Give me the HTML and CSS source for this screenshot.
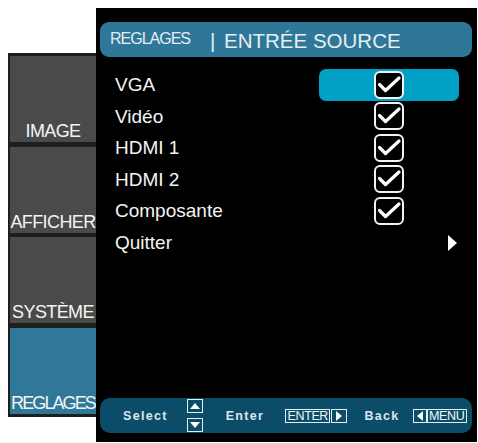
FILE: index.html
```html
<!DOCTYPE html>
<html lang="fr">
<head>
<meta charset="utf-8">
<title>Réglages - Entrée source</title>
<link rel="stylesheet" href="styles.css">
</head>
<body>
<div class="screen">
  <nav class="side">
    <div class="tab"><span>IMAGE</span></div>
    <div class="tab"><span>AFFICHER</span></div>
    <div class="tab"><span>SYSTÈME</span></div>
    <div class="tab active"><span>REGLAGES</span></div>
  </nav>
  <main class="panel">
    <header class="head">
      <span class="crumb">REGLAGES</span>
      <span class="title"><span class="sep">|</span> ENTRÉE SOURCE</span>
    </header>
    <ul class="list">
      <li class="row"><span class="label">VGA</span><span class="cell sel"><span class="box"><svg viewBox="0 0 26 24" width="26" height="24"><path d="M3.5 11.5 L9.5 17.5 L23 5" /></svg></span></span></li>
      <li class="row"><span class="label">Vidéo</span><span class="cell"><span class="box"><svg viewBox="0 0 26 24" width="26" height="24"><path d="M3.5 11.5 L9.5 17.5 L23 5" /></svg></span></span></li>
      <li class="row"><span class="label">HDMI 1</span><span class="cell"><span class="box"><svg viewBox="0 0 26 24" width="26" height="24"><path d="M3.5 11.5 L9.5 17.5 L23 5" /></svg></span></span></li>
      <li class="row"><span class="label">HDMI 2</span><span class="cell"><span class="box"><svg viewBox="0 0 26 24" width="26" height="24"><path d="M3.5 11.5 L9.5 17.5 L23 5" /></svg></span></span></li>
      <li class="row"><span class="label">Composante</span><span class="cell"><span class="box"><svg viewBox="0 0 26 24" width="26" height="24"><path d="M3.5 11.5 L9.5 17.5 L23 5" /></svg></span></span></li>
      <li class="row"><span class="label">Quitter</span><span class="cell end"><span class="tri"></span></span></li>
    </ul>
    <footer class="foot">
      <span class="key k-select">Select</span>
      <span class="updown"><i class="kbd up"></i><i class="kbd down"></i></span>
      <span class="key k-enter">Enter</span>
      <span class="tag t-enter">ENTER</span><i class="kbd right"></i>
      <span class="key k-back">Back</span>
      <i class="kbd left"></i><span class="tag">MENU</span>
    </footer>
  </main>
</div>
</body>
</html>
```
FILE: styles.css
```css
body {
  margin: 0;
  background: #ffffff;
  font-family: "Liberation Sans", Arial, sans-serif;
}

.screen {
  display: flex;
  align-items: flex-start;
  padding: 8px 0 0 8px;
}

/* left tabs */
.side {
  margin-top: 45px;
  width: 86px;
  border: solid #1e1e1e;
  border-width: 3px 0 3px 2px;
  background: #1e1e1e;
  display: flex;
  flex-direction: column;
  gap: 4.5px;
}

.tab {
  height: 86px;
  box-sizing: border-box;
  background: #4a4a4a;
  display: flex;
  align-items: flex-end;
  justify-content: center;
  padding-bottom: 2px;
  color: #f4f4f4;
  font-size: 18px;
  line-height: 18px;
  letter-spacing: -0.6px;
  white-space: nowrap;
}

.tab.active {
  background: #2f7899;
  letter-spacing: -1.9px;
}

/* main panel */
.panel {
  width: 381px;
  height: 434px;
  box-sizing: border-box;
  background: #000000;
  padding: 14px 5px 9px 4px;
  display: flex;
  flex-direction: column;
}

.head {
  height: 35px;
  flex: none;
  background: #2f7799;
  border-radius: 9px;
  display: flex;
  align-items: center;
  padding-left: 10px;
  color: #e4eef3;
}

.crumb {
  font-size: 16px;
  line-height: 16px;
  letter-spacing: -1px;
  margin-bottom: 2px;
}

.title {
  font-size: 20.5px;
  line-height: 20px;
  margin-left: 20px;
  margin-top: 2px;
  white-space: nowrap;
}

.sep {
  margin-right: 3px;
}

.list {
  list-style: none;
  margin: 12px 0 0;
  padding: 0 13px 0 15px;
  flex: 1;
  color: #f4f4f4;
  font-size: 19px;
}

.row {
  height: 31.5px;
  display: flex;
  align-items: center;
}

.label {
  flex: 1;
  line-height: 19px;
}

.cell {
  width: 140px;
  height: 100%;
  display: flex;
  align-items: center;
  justify-content: center;
}

.cell.sel {
  background: #00a1c4;
  border-radius: 7px;
}

.cell.end {
  justify-content: flex-end;
  padding-right: 2px;
  box-sizing: border-box;
}

.box {
  width: 30px;
  height: 28px;
  box-sizing: border-box;
  border: 2px solid #f2f2f2;
  border-radius: 6px;
  background: #000000;
  display: flex;
  align-items: center;
  justify-content: center;
}

.box svg path {
  fill: none;
  stroke: #ffffff;
  stroke-width: 3.2;
  stroke-linecap: round;
  stroke-linejoin: round;
}

.tri {
  width: 0;
  height: 0;
  margin-top: 2px;
  border-left: 9px solid #ffffff;
  border-top: 8.5px solid transparent;
  border-bottom: 8.5px solid transparent;
}

/* footer help bar */
.foot {
  height: 35px;
  flex: none;
  background: #0b4d69;
  border-radius: 10px;
  display: flex;
  align-items: center;
  padding-left: 23px;
  color: #dce6ea;
}

.key {
  font-weight: bold;
  font-size: 12.5px;
  letter-spacing: 1.3px;
  line-height: 14px;
}

.updown {
  display: flex;
  flex-direction: column;
  gap: 5px;
  margin-left: 19px;
}

.k-enter { margin-left: 23px; }
.t-enter { margin-left: 21px; }
.k-back { margin-left: 17px; }

.kbd {
  width: 16px;
  height: 14px;
  box-sizing: border-box;
  border: 1.5px solid #e6eef2;
  display: flex;
  align-items: center;
  justify-content: center;
  flex: none;
}

.kbd::before {
  content: "";
  width: 0;
  height: 0;
}

.up::before {
  border-left: 5.5px solid transparent;
  border-right: 5.5px solid transparent;
  border-bottom: 6.5px solid #ffffff;
}

.down::before {
  border-left: 5.5px solid transparent;
  border-right: 5.5px solid transparent;
  border-top: 6.5px solid #ffffff;
}

.right {
  margin-left: 1px;
}

.right::before {
  border-top: 5px solid transparent;
  border-bottom: 5px solid transparent;
  border-left: 6px solid #ffffff;
}

.left {
  width: 14px;
  margin-left: 13px;
}

.left::before {
  border-top: 5px solid transparent;
  border-bottom: 5px solid transparent;
  border-right: 6px solid #ffffff;
}

.tag {
  height: 14px;
  box-sizing: border-box;
  border: 1px solid #e6eef2;
  padding: 0 1.5px;
  font-size: 12.5px;
  line-height: 12px;
  letter-spacing: -0.4px;
  color: #f2f6f8;
}
```
